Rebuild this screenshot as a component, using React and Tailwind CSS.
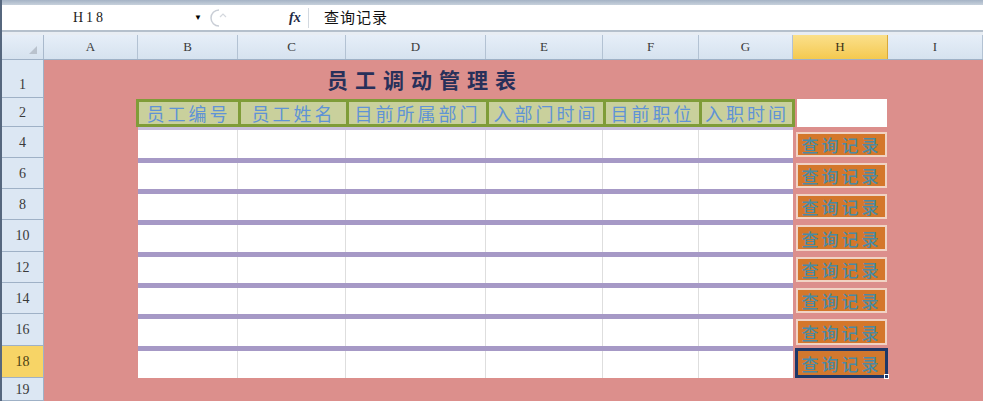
import React from "react";

const cjk = "font-['Noto_Sans_CJK_SC','Noto_Sans_CJK_TC',sans-serif]";
const serif = "font-['Liberation_Serif','DejaVu_Serif',serif]";

const letters = [
  { l: "A", w: "w-[94px]" },
  { l: "B", w: "w-[100px]" },
  { l: "C", w: "w-[108px]" },
  { l: "D", w: "w-[140px]" },
  { l: "E", w: "w-[117px]" },
  { l: "F", w: "w-[96px]" },
  { l: "G", w: "w-[94px]" },
  { l: "H", w: "w-[95px]", sel: true },
  { l: "I", w: "w-[95px]" },
];

const heads = [
  { t: "员工编号", w: "w-[102px]" },
  { t: "员工姓名", w: "w-[108px]" },
  { t: "目前所属部门", w: "w-[140px]" },
  { t: "入部门时间", w: "w-[117px]" },
  { t: "目前职位", w: "w-[96px]" },
  { t: "入职时间", w: "w-[96px]", last: true },
];

const dataCols = ["w-[100px]", "w-[108px]", "w-[140px]", "w-[117px]", "w-[96px]", "w-[94px]"];

const rows = [
  { n: "4", h: "h-[31px]", first: true },
  { n: "6", h: "h-[31px]" },
  { n: "8", h: "h-[31px]" },
  { n: "10", h: "h-[32px]" },
  { n: "12", h: "h-[31px]" },
  { n: "14", h: "h-[31px]" },
  { n: "16", h: "h-[32px]" },
  { n: "18", h: "h-[32px]", sel: true },
];

function RowHead({ n, sel, align = "items-center" }) {
  return (
    <div
      className={`w-[42px] shrink-0 flex ${align} justify-center border-b border-r border-[#9fb1c6] text-[14px] ${serif} ${
        sel ? "bg-[#f7d466] text-[#4a3f14]" : "bg-[#dce7f3] text-[#3a3a3a]"
      }`}
    >
      {n}
    </div>
  );
}

function Button({ sel }) {
  if (sel) {
    return (
      <div className="relative h-full border-[3px] border-[#1d3768] bg-[#d2782e] flex items-center justify-center">
        <span className={`${cjk} text-[17px] leading-none tracking-[3px] text-[#4a8aa4] font-medium`}>查询记录</span>
        <div className="absolute -right-[4px] -bottom-[4px] w-[5px] h-[5px] bg-[#1d3768] border border-white" />
      </div>
    );
  }
  return (
    <div className="h-full border-2 border-[#f1d3c4] bg-[#d4772b] flex items-center justify-center">
      <span className={`${cjk} text-[17px] leading-none tracking-[3px] text-[#4a8aa4] font-medium`}>查询记录</span>
    </div>
  );
}

export default function App() {
  return (
    <div className="w-[983px] h-[401px] overflow-hidden flex flex-col bg-[#dc8f8c] border-l-2 border-[#56677e]">
      {/* top strip */}
      <div className="h-[5px] bg-gradient-to-b from-[#a5b3c5] to-[#c7d1dc]" />
      {/* formula bar */}
      <div className="h-[25px] flex items-center bg-white">
        <div className="w-[201px] h-full flex items-center relative">
          <span className={`${serif} text-[14px] tracking-[3px] text-[#222] ml-[71px]`}>H18</span>
          <span className="absolute left-[192px] top-[8px] text-[8px] leading-none text-black">▼</span>
        </div>
        <div className="w-[105px] h-full flex items-center relative">
          <svg width="22" height="22" viewBox="0 0 22 22" className="ml-[4px]">
            <path d="M12 3 A8 8 0 0 0 12 19" fill="none" stroke="#c9ced6" strokeWidth="1.5" />
            <path d="M13 10 l3 -3 l3 3" fill="none" stroke="#d4d8de" strokeWidth="1.2" />
          </svg>
          <span className={`${serif} absolute left-[86px] text-[14px] italic font-bold text-[#1e2a44]`}>fx</span>
        </div>
        <div className="w-px h-[20px] bg-[#d3d9e0]" />
        <span className={`${cjk} ml-[15px] text-[15px] text-[#111] tracking-[1px]`}>查询记录</span>
      </div>
      <div className="h-[2px] bg-[#b5c0cc]" />
      <div className="h-[3px] bg-[#e8edf3]" />
      {/* column headers */}
      <div className="h-[25px] flex bg-gradient-to-b from-[#e6eef8] to-[#d6e2ef] border-b border-[#9fb1c6]">
        <div className="w-[42px] shrink-0 relative border-r border-[#a9b9cc]">
          <svg width="8" height="8" viewBox="0 0 8 8" className="absolute right-[6px] bottom-[5px]">
            <path d="M8 0 L8 8 L0 8 Z" fill="#b9c2cd" />
          </svg>
        </div>
        {letters.map((c) => (
          <div
            key={c.l}
            className={`${c.w} shrink-0 flex items-center justify-center border-r ${serif} text-[13px] ${
              c.sel
                ? "bg-gradient-to-b from-[#fbe08a] to-[#f4c94e] border-[#d9a93b] text-[#3b3216]"
                : "border-[#b3c2d3] text-[#3a3a3a]"
            }`}
          >
            {c.l}
          </div>
        ))}
      </div>
      {/* row 1 */}
      <div className="h-[38px] flex">
        <RowHead n="1" align="items-end pb-[2px]" />
        <div className="flex-1 flex items-center pl-[283px] pt-[2px]">
          <span className={`${cjk} text-[21px] font-bold tracking-[7px] text-[#28305a]`}>员工调动管理表</span>
        </div>
      </div>
      {/* row 2 */}
      <div className="h-[29px] flex">
        <RowHead n="2" />
        <div className="w-[92px] shrink-0" />
        <div className="w-[659px] shrink-0 flex pt-[1px]">
          {heads.map((h) => (
            <div
              key={h.t}
              className={`${h.w} shrink-0 flex items-center justify-center bg-[#c9d09c] border-y-[3px] border-l-[3px] ${
                h.last ? "border-r-[3px]" : ""
              } border-[#7f9c38]`}
            >
              <span className={`${cjk} text-[18px] leading-none tracking-[3px] text-[#5f93d6] whitespace-nowrap`}>{h.t}</span>
            </div>
          ))}
        </div>
        <div className="w-[93px] shrink-0 pl-[2px] pr-px pt-px">
          <div className="h-full bg-white" />
        </div>
        <div className="w-[95px] shrink-0" />
      </div>
      {/* data rows */}
      {rows.map((r) => (
        <div key={r.n} className={`${r.h} flex`}>
          <RowHead n={r.n} sel={r.sel} />
          <div className="w-[94px] shrink-0" />
          <div className="w-[655px] shrink-0 flex flex-col">
            <div className={r.first ? "h-[3px] bg-[#c8bfdc]" : "h-[5px] bg-[#a699c6]"} />
            <div className="flex-1 flex bg-white">
              {dataCols.map((w, i) => (
                <div key={i} className={`${w} shrink-0 ${i < 5 ? "border-r border-[#dedede]" : ""}`} />
              ))}
            </div>
          </div>
          <div className={`w-[95px] shrink-0 ${r.sel ? "pl-[2px] pr-0 pt-[2px] pb-0" : "pl-[3px] pr-px pt-[5px] pb-px"}`}>
            <Button sel={r.sel} />
          </div>
          <div className="w-[95px] shrink-0" />
        </div>
      ))}
      {/* row 19 */}
      <div className="h-[23px] flex">
        <RowHead n="19" />
        <div className="flex-1" />
      </div>
    </div>
  );
}
